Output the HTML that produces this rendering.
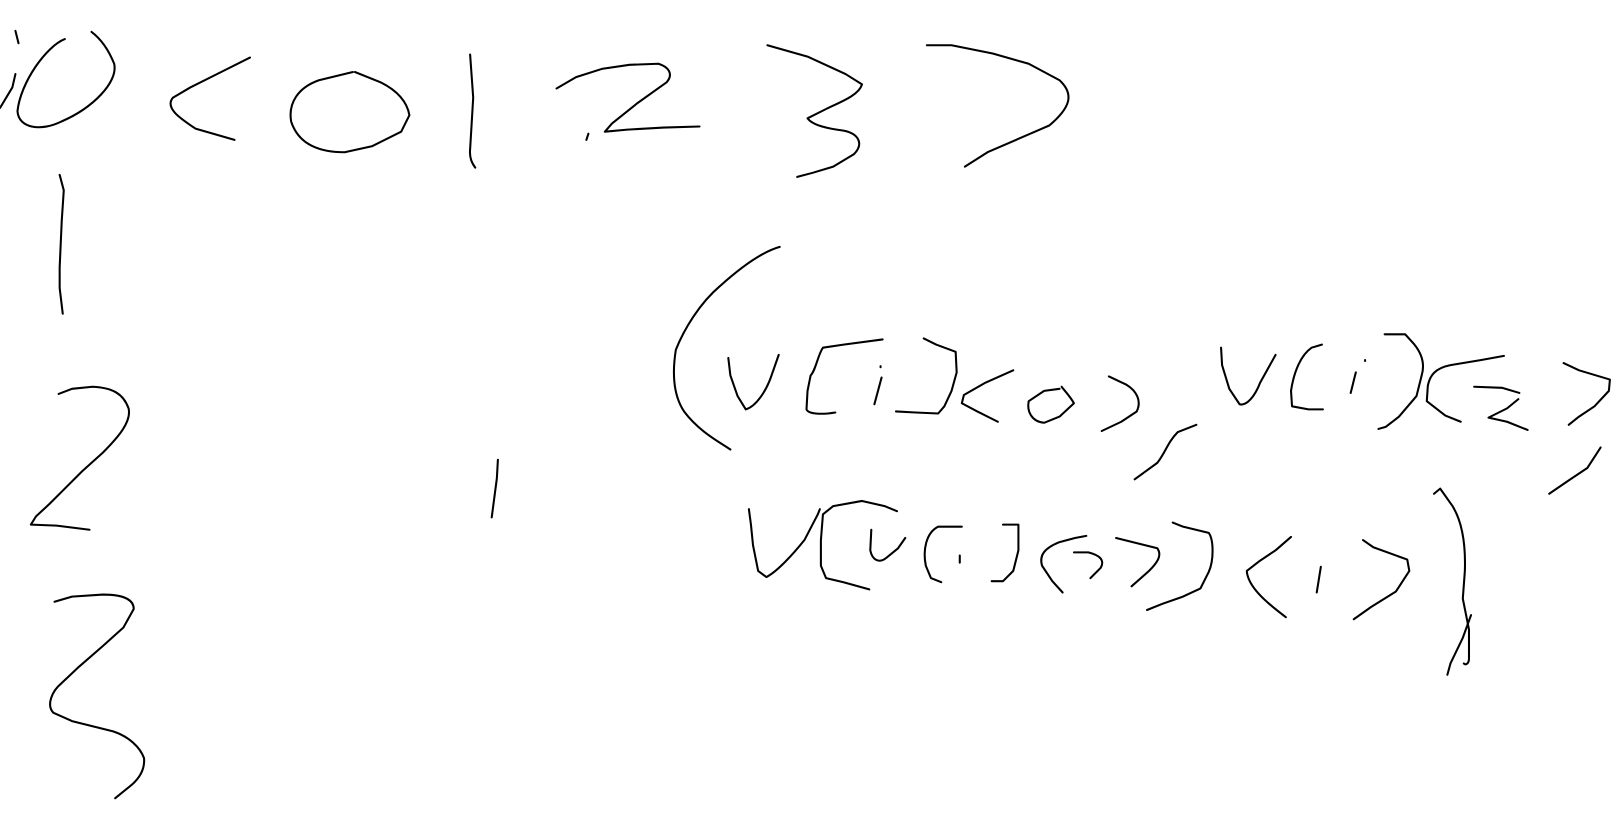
<!DOCTYPE html>
<html><head><meta charset="utf-8"><style>
html,body{margin:0;padding:0;background:#fff;width:1613px;height:826px;overflow:hidden}
svg{display:block}
path{fill:none;stroke:#000;stroke-width:2;stroke-linecap:round;stroke-linejoin:round}
</style></head><body>
<svg width="1613" height="826" viewBox="0 0 1568 803" preserveAspectRatio="none">
<path d="M15,30 L18,42"/>
<path d="M15,72 L12,85 L0,105"/>
<path d="M63,38 C45,45 20,80 17,108 C18,125 40,128 60,118 C90,105 115,80 111,62 C105,47 97,37 89,31"/>
<path d="M243,56 L215,70 L185,85 L168,95 C160,105 175,115 190,125 L228,136"/>
<path d="M343,70 L310,78 C290,85 280,100 283,118 C290,140 310,148 335,148 L362,142 L390,128 L398,112 C395,95 380,85 370,80 L345,70"/>
<path d="M457,53 L460,95 L457,145 C456,155 460,160 462,163"/>
<path d="M541,86 L560,75 L585,67 L612,63 L640,62 C650,65 655,72 648,80 L620,100 L595,120 L588,128 L610,126 L645,124 L680,123"/>
<path d="M572,130 L570,136"/>
<path d="M746,44 L785,55 L822,72 L838,82 C835,92 820,98 805,105 L785,115 C790,122 805,125 820,127 C835,130 840,140 830,150 L810,162 L790,168 L775,172"/>
<path d="M901,44 L925,44 L965,52 L1000,62 L1030,78 C1045,92 1040,105 1020,122 L990,135 L960,148 L938,162"/>
<path d="M58,170 L62,185 L60,215 L58,260 L58,280 L61,305"/>
<path d="M57,383 L70,378 L90,376 C110,377 120,383 125,397 C128,410 115,425 100,440 L80,458 L60,478 L48,490 L35,502 L30,510 L55,511 L87,515"/>
<path d="M53,585 L70,580 L100,578 C120,578 130,583 130,592 L120,610 L100,628 L77,648 L60,664 C50,672 45,686 52,693 L70,701 L110,711 C125,716 136,726 140,737 C141,748 136,756 128,763 L112,776"/>
<path d="M484,447 L483,465 L478,503"/>
<path d="M758,240 C740,245 720,260 700,278 C680,295 665,320 657,340 C653,365 655,385 665,400 C680,420 700,430 710,437"/>
<path d="M708,348 L710,365 L717,385 L725,398 C735,395 745,380 750,365 L757,345"/>
<path d="M858,330 L820,335 L800,338 C795,345 793,360 788,365 L785,380 L784,398 C786,403 800,403 812,401"/>
<path d="M857,367 L850,393"/><path d="M856,356 L856,357"/>
<path d="M871,400 L890,401 L912,402 L918,395 L925,380 L930,362 L929,342 L910,335 L898,329"/>
<path d="M985,360 L958,372 L937,384 L935,392 L950,400 L970,410"/>
<path d="M1030,378 L1015,380 L1000,390 C998,400 1003,410 1015,411 L1030,405 L1044,392 C1040,385 1035,380 1032,376"/>
<path d="M1078,366 L1095,374 C1105,380 1110,390 1105,400 L1090,410 L1071,419"/>
<path d="M1163,413 L1145,420 C1135,430 1133,440 1125,450 L1103,466"/>
<path d="M1187,338 L1188,355 L1195,378 L1205,393 C1212,395 1220,385 1225,372 L1240,345"/>
<path d="M1285,335 L1275,338 C1265,345 1258,360 1255,380 L1256,395 L1272,398 L1286,398"/>
<path d="M1318,362 L1313,382"/><path d="M1327,350 L1327,351"/>
<path d="M1346,325 L1366,325 L1375,335 C1383,345 1385,355 1382,365 L1377,385 L1360,405 L1347,415 L1340,417"/>
<path d="M1462,346 L1440,350 L1410,355 C1395,358 1390,365 1388,375 L1387,390 L1405,404 L1420,410"/>
<path d="M1433,376 L1460,377 L1477,382"/>
<path d="M1476,388 L1465,397 L1447,406 L1465,410 L1485,418"/>
<path d="M1520,353 L1535,360 L1565,369 L1564,380 L1550,395 L1535,405 L1525,413"/>
<path d="M1556,435 L1543,455 L1525,467 L1506,480"/>
<path d="M728,495 L730,510 L732,530 L737,555 L745,561 C755,556 770,540 782,525 L795,500 L797,495"/>
<path d="M872,497 L860,492 L838,487 L810,492 L800,500 L798,525 L798,550 L803,562 L820,566 L845,573"/>
<path d="M847,515 L846,535 C848,545 855,548 862,542 L873,533 L880,523"/>
<path d="M935,512 L912,512 C900,518 897,535 900,550 L905,562 L915,566"/>
<path d="M933,540 L933,547"/>
<path d="M975,510 L990,510 L990,535 L985,555 L975,565 L964,565"/>
<path d="M1056,521 L1045,523 L1030,527 C1015,533 1010,540 1013,550 L1023,565 L1033,576"/>
<path d="M1044,537 L1058,537 C1070,540 1074,545 1070,552 L1060,562"/>
<path d="M1085,523 L1125,533 C1130,540 1125,547 1117,555 L1100,570"/>
<path d="M1140,508 L1150,512 L1175,518 C1180,525 1180,545 1175,556 L1167,572 L1150,580 L1130,587 L1115,593"/>
<path d="M1255,522 L1240,535 L1225,545 L1212,555 C1213,570 1230,585 1250,600"/>
<path d="M1284,551 L1280,576"/>
<path d="M1325,525 L1335,532 L1368,544 L1370,555 L1357,575 L1333,590 L1316,602"/>
<path d="M1394,480 L1400,475 L1412,492 C1420,505 1425,525 1424,555 L1422,582 L1428,612 L1428,640 C1428,645 1425,647 1423,645"/>
<path d="M1430,598 L1422,620 L1410,645 L1407,656"/>
</svg>
</body></html>
